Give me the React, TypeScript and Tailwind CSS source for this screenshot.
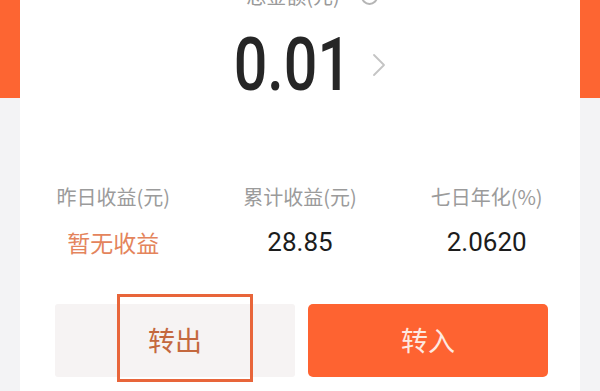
import { ChevronRight } from 'lucide-react';

const cjk = { fontFamily: '"Noto Sans CJK SC", "Noto Sans", sans-serif' };
const num = { fontFamily: 'Roboto, "Liberation Sans", sans-serif' };

const stats = [
  { label: '昨日收益(元)', value: '暂无收益', empty: true },
  { label: '累计收益(元)', value: '28.85', empty: false },
  { label: '七日年化(%)', value: '2.0620', empty: false },
];

export default function App() {
  return (
    <div
      className="w-[600px] h-[391px] overflow-hidden flex bg-[linear-gradient(to_bottom,#fd6532_0,#fd6532_98px,#f3f3f5_98px)]"
      style={cjk}
    >
      <div className="mx-[20px] flex-1 bg-white flex flex-col">
        {/* total label, cut off by the top edge */}
        <div className="-mt-[16px] h-[24px] flex items-center justify-center gap-[21px] pl-[24px]">
          <span className="text-[20px] leading-[24px] text-[#9a9a9a]">总金额(元)</span>
          <span className="w-[17px] h-[17px] rounded-full border-2 border-[#b5b5b5]" />
        </div>

        <div className="mt-[20px] h-[74px] flex items-center justify-center pl-[32px]">
          <div className="w-[118px] flex justify-center">
            <span
              className="text-[74px] leading-none font-medium text-[#262626] scale-x-[0.8] whitespace-nowrap"
              style={num}
            >
              0.01
            </span>
          </div>
          <ChevronRight className="ml-[8px] text-[#c4c4c4]" size={40} strokeWidth={1.1} />
        </div>

        <div className="mt-[83px] grid grid-cols-3">
          {stats.map(s => (
            <div key={s.label} className="flex flex-col items-center">
              <span className="text-[20px] leading-[24px] text-[#9b9b9b]">{s.label}</span>
              {s.empty ? (
                <span className="mt-[18px] h-[30px] flex items-center text-[23px] text-[#e4845c]">{s.value}</span>
              ) : (
                <span className="mt-[18px] h-[30px] flex items-center text-[26px] text-[#1c1c1c]" style={num}>
                  {s.value}
                </span>
              )}
            </div>
          ))}
        </div>

        <div className="mt-[47px] grid grid-cols-2 gap-[13px] pl-[35px] pr-[32px]">
          <div className="relative h-[73px] rounded-[3px] bg-[#f6f3f3] flex items-center justify-center">
            <span className="text-[27px] text-[#c4683e]">转出</span>
            {/* highlight box from the screenshot annotation */}
            <div className="absolute left-[62px] -top-[10px] w-[136px] h-[88px] border-[3px] border-[#e8653a]" />
          </div>
          <div className="h-[73px] rounded-[5px] bg-[#fe6331] flex items-center justify-center">
            <span className="text-[27px] text-[#fde9e1]">转入</span>
          </div>
        </div>
      </div>
    </div>
  );
}
